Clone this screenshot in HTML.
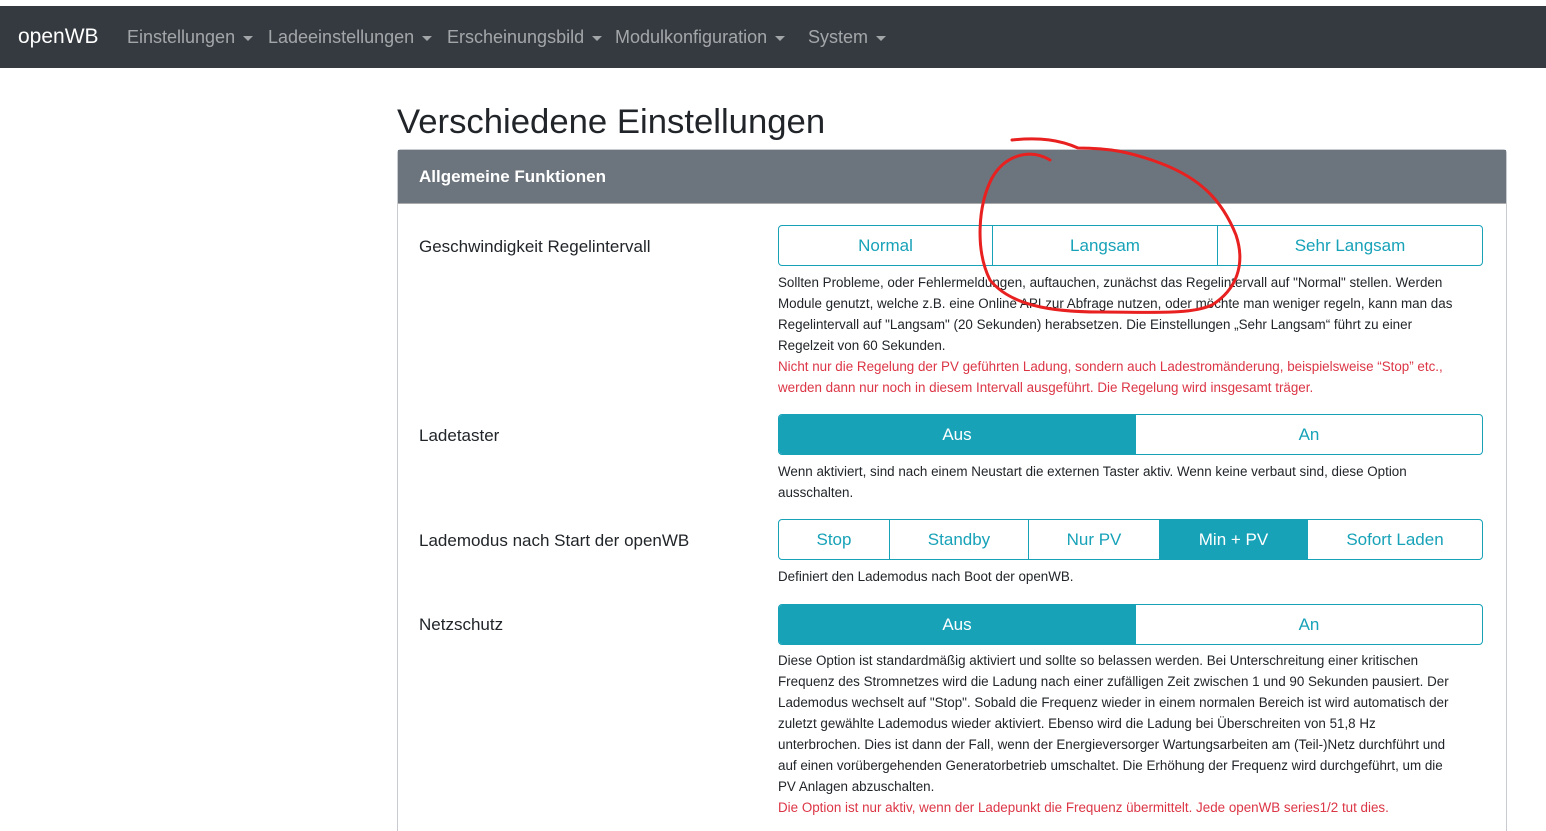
<!DOCTYPE html>
<html style="height:831px;overflow:hidden"><head><meta charset="utf-8"><style>
*{margin:0;padding:0;box-sizing:border-box}
html,body{height:831px;overflow:hidden}
body{width:1546px;background:#fff;font-family:"Liberation Sans",sans-serif;color:#212529;position:relative}
.nav{position:absolute;left:0;top:6px;width:1546px;height:62px;background:#343a40}
.nav span{position:absolute;top:21px;font-size:18px;color:rgba(255,255,255,.55);white-space:nowrap}
.nav .car{display:inline-block;width:0;height:0;border-left:5px solid transparent;border-right:5px solid transparent;border-top:5px solid rgba(255,255,255,.55);vertical-align:middle;margin-left:8px}
.a{position:absolute;white-space:nowrap}
.card{position:absolute;left:397px;top:149px;width:1110px;height:700px;border:1px solid #c8ccd0;border-radius:4px}
.ch{position:absolute;left:0;top:0;width:100%;height:54px;background:#6c757d;border-bottom:1px solid #aaa}
.lbl{font-size:17px;color:#212529}
.grp{position:absolute;left:778px;width:705px;height:41px;border:1px solid #17a2b8;border-radius:4px;overflow:hidden;display:flex}
.grp div{height:100%;display:flex;align-items:center;justify-content:center;color:#17a2b8;font-size:17px;border-right:1px solid #17a2b8}
.grp div:last-child{border-right:none}
.grp .on{background:#17a2b8;color:#fff}
.t{position:absolute;left:778px;font-size:13.4px;line-height:21px;white-space:nowrap;color:#212529}
.r{color:#dc3545}
</style></head><body>
<div class="nav">
<span style="left:18px;top:19px;color:#fff;font-size:21px">openWB</span>
<span style="left:127px">Einstellungen<i class="car"></i></span>
<span style="left:268px">Ladeeinstellungen<i class="car"></i></span>
<span style="left:447px">Erscheinungsbild<i class="car"></i></span>
<span style="left:615px">Modulkonfiguration<i class="car"></i></span>
<span style="left:808px">System<i class="car"></i></span>
</div>
<div class="a" style="left:397px;top:103px;font-size:34.7px;color:#212529">Verschiedene Einstellungen</div>
<div class="card"><div class="ch"></div></div>
<div class="a" style="left:419px;top:167px;font-size:17px;font-weight:bold;color:#fff">Allgemeine Funktionen</div>

<div class="a lbl" style="left:419px;top:237px">Geschwindigkeit Regelintervall</div>
<div class="grp" style="top:225px"><div style="width:214px">Normal</div><div style="width:225px">Langsam</div><div style="flex:1">Sehr Langsam</div></div>
<div class="t" style="top:272px">Sollten Probleme, oder Fehlermeldungen, auftauchen, zunächst das Regelintervall auf "Normal" stellen. Werden<br>Module genutzt, welche z.B. eine Online API zur Abfrage nutzen, oder möchte man weniger regeln, kann man das<br>Regelintervall auf "Langsam" (20 Sekunden) herabsetzen. Die Einstellungen „Sehr Langsam“ führt zu einer<br>Regelzeit von 60 Sekunden.<br><span class="r">Nicht nur die Regelung der PV geführten Ladung, sondern auch Ladestromänderung, beispielsweise “Stop” etc.,<br>werden dann nur noch in diesem Intervall ausgeführt. Die Regelung wird insgesamt träger.</span></div>

<div class="a lbl" style="left:419px;top:426px">Ladetaster</div>
<div class="grp" style="top:414px"><div class="on" style="width:357px">Aus</div><div style="flex:1">An</div></div>
<div class="t" style="top:461px">Wenn aktiviert, sind nach einem Neustart die externen Taster aktiv. Wenn keine verbaut sind, diese Option<br>ausschalten.</div>

<div class="a lbl" style="left:419px;top:531px">Lademodus nach Start der openWB</div>
<div class="grp" style="top:519px"><div style="width:111px">Stop</div><div style="width:139px">Standby</div><div style="width:131px">Nur PV</div><div class="on" style="width:148px">Min + PV</div><div style="flex:1">Sofort Laden</div></div>
<div class="t" style="top:566px">Definiert den Lademodus nach Boot der openWB.</div>

<div class="a lbl" style="left:419px;top:615px">Netzschutz</div>
<div class="grp" style="top:604px"><div class="on" style="width:357px">Aus</div><div style="flex:1">An</div></div>
<div class="t" style="top:650px">Diese Option ist standardmäßig aktiviert und sollte so belassen werden. Bei Unterschreitung einer kritischen<br>Frequenz des Stromnetzes wird die Ladung nach einer zufälligen Zeit zwischen 1 und 90 Sekunden pausiert. Der<br>Lademodus wechselt auf "Stop". Sobald die Frequenz wieder in einem normalen Bereich ist wird automatisch der<br>zuletzt gewählte Lademodus wieder aktiviert. Ebenso wird die Ladung bei Überschreiten von 51,8 Hz<br>unterbrochen. Dies ist dann der Fall, wenn der Energieversorger Wartungsarbeiten am (Teil-)Netz durchführt und<br>auf einen vorübergehenden Generatorbetrieb umschaltet. Die Erhöhung der Frequenz wird durchgeführt, um die<br>PV Anlagen abzuschalten.<br><span class="r">Die Option ist nur aktiv, wenn der Ladepunkt die Frequenz übermittelt. Jede openWB series1/2 tut dies.</span></div>

<svg style="position:absolute;left:0;top:0" width="1546" height="831">
<path d="M1012 140 C1040 137,1060 140,1078 148 C1110 148,1130 152,1160 163 C1200 178,1222 200,1236 235 C1246 265,1236 290,1212 305 C1190 315,1150 312,1100 312 C1050 312,1010 305,990 280 C975 250,978 205,992 178 C1005 155,1030 148,1050 160" fill="none" stroke="#e8201f" stroke-width="3" stroke-linecap="round"/>
</svg>
</body></html>
